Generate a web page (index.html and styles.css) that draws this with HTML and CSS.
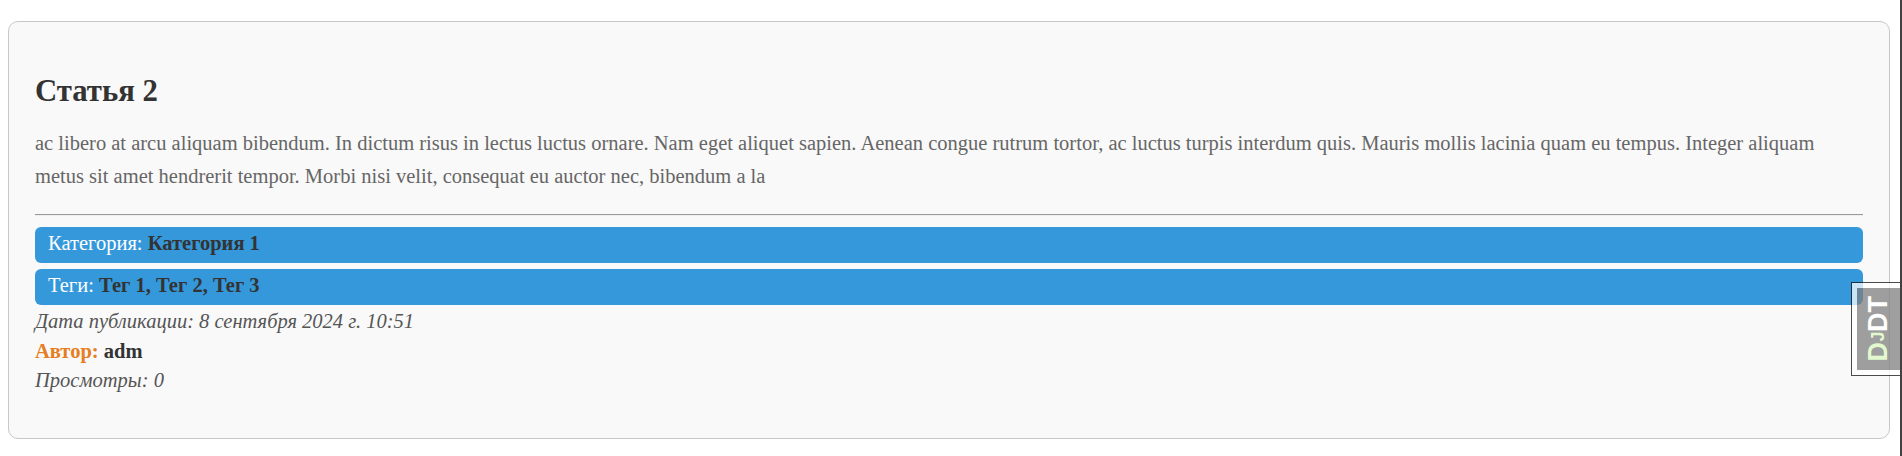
FILE: index.html
```html
<!DOCTYPE html>
<html lang="ru">
<head>
<meta charset="utf-8">
<title>Статья 2</title>
<link rel="stylesheet" href="styles.css">
</head>
<body>
<article class="card">
  <h2 class="title">Статья 2</h2>
  <p class="content">ac libero at arcu aliquam bibendum. In dictum risus in lectus luctus ornare. Nam eget aliquet sapien. Aenean congue rutrum tortor, ac luctus turpis interdum quis. Mauris mollis lacinia quam eu tempus. Integer aliquam metus sit amet hendrerit tempor. Morbi nisi velit, consequat eu auctor nec, bibendum a la</p>
  <hr class="rule">
  <div class="tag">Категория: <strong>Категория 1</strong></div>
  <div class="tag">Теги: <strong>Тег 1, Тег 2, Тег 3</strong></div>
  <div class="meta">Дата публикации: 8 сентября 2024 г. 10:51</div>
  <div class="author"><span class="label">Автор:</span> adm</div>
  <div class="meta">Просмотры: 0</div>
</article>
<div class="handle"><div class="handle-button"><span class="handle-text"><span class="dj">D<span class="small">J</span></span>DT</span></div></div>
<div class="edge"></div>
</body>
</html>
```
FILE: styles.css
```css
html { height: 100%; overflow: hidden; background: #fff; }
body {
  margin: 21px 12px 0 8px;
  font-family: "Liberation Serif", "Times New Roman", serif;
  font-size: 20.5px;
  color: #333;
}
.card {
  box-sizing: border-box;
  height: 418px;
  padding: 26px;
  border: 1px solid #c8c8c8;
  border-radius: 10px;
  background: #f9f9f9;
}
.title { margin: 26px 0 18px; font-size: 30.75px; line-height: 35px; color: #333; }
.content { margin: 0 0 21.4px; line-height: 32.8px; color: #666; }
.rule { margin: 0 0 11px; border: 0; border-top: 1px solid #9a9a9a; border-bottom: 1px solid #eee; }
.tag {
  box-sizing: border-box;
  height: 36px;
  margin-bottom: 6px;
  padding: 0 13px;
  border-radius: 6px;
  background: #3498db;
  color: #fff;
  line-height: 32px;
}
.tag strong { color: #333; }
.meta { line-height: 29.5px; font-style: italic; color: #555; }
.tag + .meta { margin-top: -4px; }
.author { padding-top: 1px; line-height: 28.5px; font-weight: bold; }
.label { color: #e67e22; }
.handle {
  position: fixed;
  top: 282px;
  right: 2px;
  box-sizing: border-box;
  width: 49px;
  height: 94px;
  padding: 5px 0 5px 5px;
  border: 1px solid #111;
  border-right: 0;
  background: #fff;
  opacity: .75;
}
.handle-button {
  height: 100%;
  display: flex;
  align-items: center;
  justify-content: center;
  background: #7f7f7f;
}
.handle-text {
  margin-right: 2px;
  writing-mode: vertical-rl;
  transform: rotate(180deg);
  font: bold 27px/42px "Liberation Sans", Arial, sans-serif;
  color: #fff;
}
.dj { color: #daf8c0; }
.small { margin: 0 1px; font-size: 18px; }
.edge { position: fixed; top: 0; right: 0; bottom: 0; width: 2px; background: #414141; }
```
